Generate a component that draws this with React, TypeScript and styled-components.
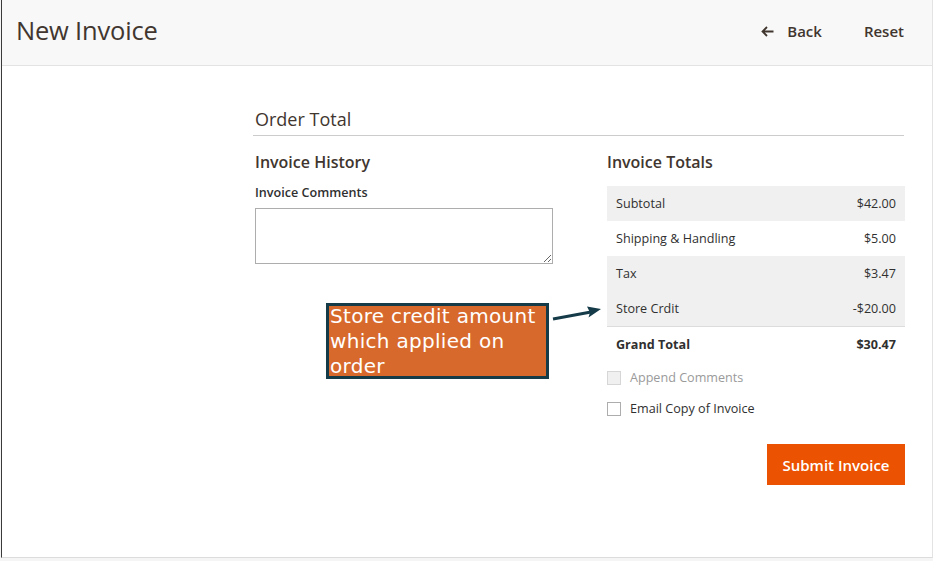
import styled, { createGlobalStyle } from "styled-components";

const GlobalStyle = createGlobalStyle`
    html, body {
        margin: 0;
        padding: 0;
        background: #f5f5f5;
        font-family: "Open Sans", "Liberation Sans", sans-serif;
        color: #303030;
    }
    * {
        box-sizing: border-box;
    }
`;

const Frame = styled.div`
    position: relative;
    width: 932px;
    height: 558px;
    margin-left: 1px;
    background: #fff;
    border-left: 1px solid #3a3a3a;
    border-right: 1px solid #e3e3e3;
    border-bottom: 1px solid #dcdcdc;
`;

const PageHeader = styled.header`
    height: 66px;
    display: flex;
    align-items: center;
    justify-content: space-between;
    padding: 0 28px 0 14px;
    background: #f8f8f8;
    border-bottom: 1px solid #e3e3e3;
`;

const PageTitle = styled.h1`
    margin: 0 0 6px;
    font-size: 25.5px;
    font-weight: 400;
    color: #41362f;
    letter-spacing: -0.2px;
`;

const Actions = styled.div`
    display: flex;
    align-items: center;
    gap: 42px;
    margin-bottom: 3px;
`;

const ActionButton = styled.button`
    display: flex;
    align-items: center;
    gap: 13px;
    border: 0;
    background: none;
    padding: 0;
    font-family: inherit;
    font-size: 15px;
    font-weight: 600;
    color: #41362f;
    cursor: pointer;
`;

const Content = styled.main`
    padding: 42px 28px 0 251px;
`;

const SectionTitle = styled.h2`
    margin: 0;
    padding: 0 0 5px 2px;
    font-size: 18px;
    font-weight: 400;
    line-height: 22px;
    color: #41362f;
    border-bottom: 1px solid #cccccc;
`;

const Columns = styled.div`
    display: grid;
    grid-template-columns: 298px 298px;
    gap: 54px;
    padding: 15px 0 0 2px;
`;

const Column = styled.section`
    display: flex;
    flex-direction: column;
`;

const ColumnTitle = styled.h3<{ $gap: number }>`
    margin: 0 0 ${(p) => p.$gap}px;
    font-size: 16px;
    font-weight: 600;
    line-height: 22px;
    color: #41362f;
`;

const FieldLabel = styled.label`
    font-size: 12.6px;
    font-weight: 600;
    line-height: 18px;
    color: #303030;
    margin-bottom: 6px;
`;

const Comments = styled.textarea`
    width: 298px;
    height: 56px;
    border: 1px solid #adadad;
    font-family: inherit;
    font-size: 13px;
    padding: 6px 8px;
    resize: vertical;
`;

const Totals = styled.div`
    display: flex;
    flex-direction: column;
`;

const TotalRow = styled.div<{ $shaded?: boolean; $strong?: boolean }>`
    display: flex;
    justify-content: space-between;
    align-items: center;
    height: 35px;
    padding: 0 9px;
    font-size: 12.6px;
    font-weight: ${(p) => (p.$strong ? 700 : 400)};
    background: ${(p) => (p.$shaded ? "#f0f0f0" : "#fff")};
    border-top: ${(p) => (p.$strong ? "1px solid #dcdcdc" : "0")};
    color: #303030;
`;

const CheckLine = styled.label<{ $disabled?: boolean }>`
    display: flex;
    align-items: center;
    gap: 9px;
    margin-top: ${(p) => (p.$disabled ? 8 : 14)}px;
    font-size: 12.6px;
    color: ${(p) => (p.$disabled ? "#9a9a9a" : "#303030")};
`;

const Box = styled.span<{ $disabled?: boolean }>`
    width: 14px;
    height: 14px;
    border: 1px solid ${(p) => (p.$disabled ? "#d6d6d6" : "#adadad")};
    background: ${(p) => (p.$disabled ? "#f0f0f0" : "#fff")};
`;

const SubmitRow = styled.div`
    display: flex;
    justify-content: flex-end;
    margin-top: 27px;
`;

const SubmitButton = styled.button`
    width: 138px;
    height: 41px;
    border: 0;
    background: #eb5202;
    color: #fff;
    font-family: inherit;
    font-size: 15px;
    font-weight: 600;
    cursor: pointer;
`;

const Callout = styled.div`
    position: absolute;
    left: 324px;
    top: 303px;
    width: 223px;
    height: 76px;
    padding: 0 1px;
    background: #d8692c;
    border: 3px solid #153b49;
    color: #fff;
    font-family: "DejaVu Sans", sans-serif;
    font-size: 20px;
    line-height: 25px;
    letter-spacing: 0.3px;
`;

const CalloutText = styled.span`
    display: block;
    transform: translateY(-2.5px);
`;

const CalloutArrow = styled.svg`
    position: absolute;
    left: 547px;
    top: 303px;
`;

const rows = [
    { label: "Subtotal", value: "$42.00", shaded: true },
    { label: "Shipping & Handling", value: "$5.00", shaded: false },
    { label: "Tax", value: "$3.47", shaded: true },
    { label: "Store Crdit", value: "-$20.00", shaded: true },
];

export default function App() {
    return (
        <>
            <GlobalStyle />
            <Frame>
                <PageHeader>
                    <PageTitle>New Invoice</PageTitle>
                    <Actions>
                        <ActionButton>
                            <svg width="13" height="11" viewBox="0 0 13 11" fill="none" stroke="#41362f" strokeWidth="1.8">
                                <path d="M12.5 5.5H1.5M6 1L1.5 5.5L6 10" />
                            </svg>
                            Back
                        </ActionButton>
                        <ActionButton>Reset</ActionButton>
                    </Actions>
                </PageHeader>
                <Content>
                    <SectionTitle>Order Total</SectionTitle>
                    <Columns>
                        <Column>
                            <ColumnTitle $gap={11}>Invoice History</ColumnTitle>
                            <FieldLabel>Invoice Comments</FieldLabel>
                            <Comments />
                        </Column>
                        <Column>
                            <ColumnTitle $gap={13}>Invoice Totals</ColumnTitle>
                            <Totals>
                                {rows.map((r) => (
                                    <TotalRow key={r.label} $shaded={r.shaded}>
                                        <span>{r.label}</span>
                                        <span>{r.value}</span>
                                    </TotalRow>
                                ))}
                                <TotalRow $strong>
                                    <span>Grand Total</span>
                                    <span>$30.47</span>
                                </TotalRow>
                            </Totals>
                            <CheckLine $disabled>
                                <Box $disabled />
                                Append Comments
                            </CheckLine>
                            <CheckLine>
                                <Box />
                                Email Copy of Invoice
                            </CheckLine>
                            <SubmitRow>
                                <SubmitButton>Submit Invoice</SubmitButton>
                            </SubmitRow>
                        </Column>
                    </Columns>
                </Content>
                <Callout>
                    <CalloutText>Store credit amount which applied on order</CalloutText>
                </Callout>
                <CalloutArrow width="56" height="22" viewBox="0 0 56 22">
                    <path d="M4 16L42 9" stroke="#153b49" strokeWidth="3" />
                    <path d="M52 6L38 3.5L41 9.5L39.5 14.5Z" fill="#153b49" />
                </CalloutArrow>
            </Frame>
        </>
    );
}
